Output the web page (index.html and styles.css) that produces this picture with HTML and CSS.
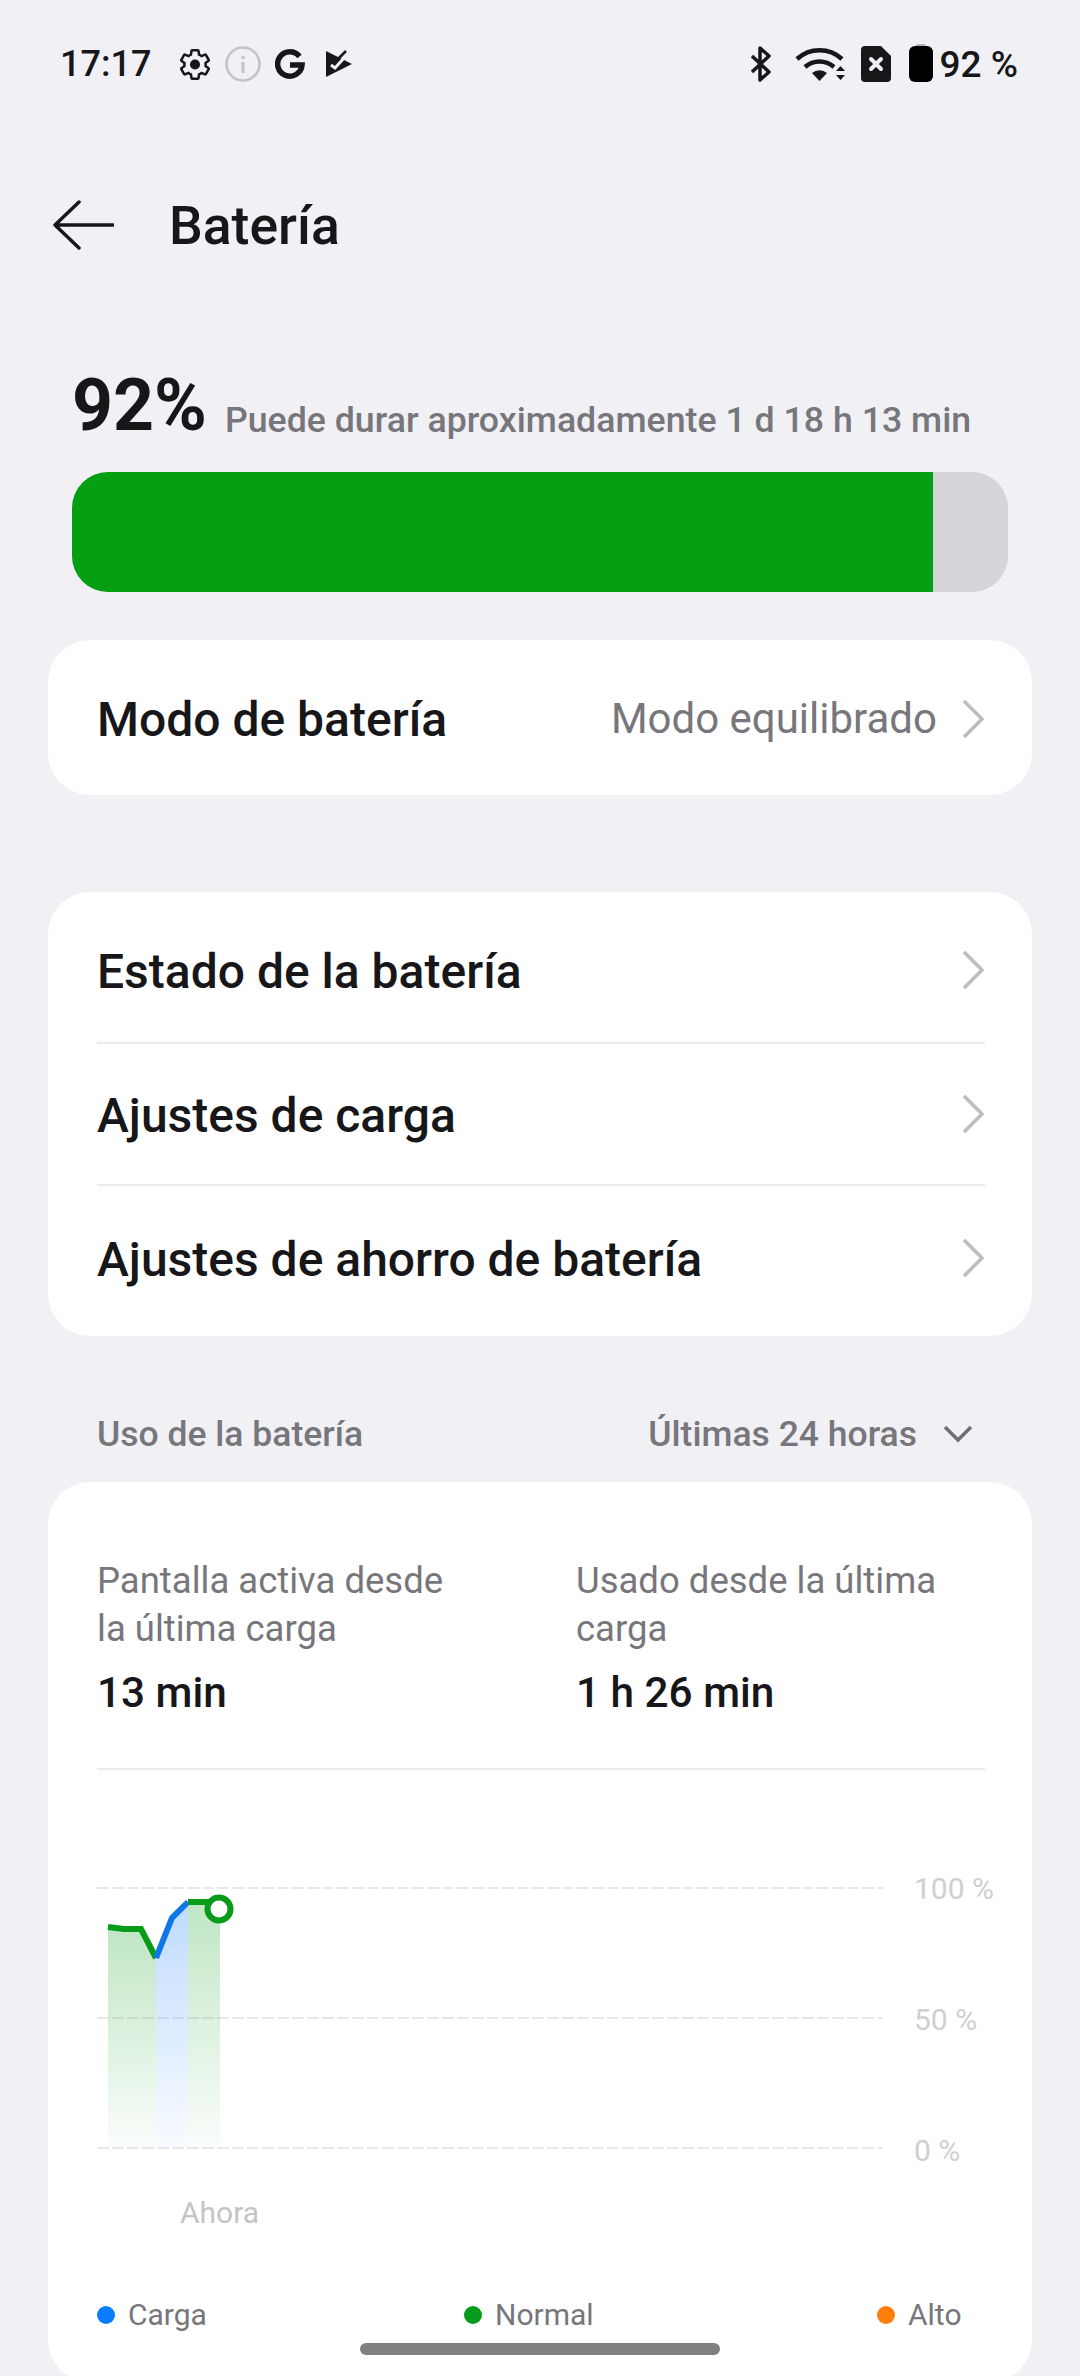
FILE: index.html
```html
<!DOCTYPE html>
<html lang="es">
<head>
  <meta charset="UTF-8">
  <title>Batería</title>
  <meta name="viewport" content="width=device-width, initial-scale=1.0" />
  <link rel="stylesheet" href="styles.css">
</head>
<body>
  <div class="status-bar">
    <div class="status-left">
      <span class="time">17:17</span>
      <svg class="ic-gear" width="30" height="31" viewBox="2 1.500 20 21"><path d="M19.140 12.940c.04-.3.06-.61.06-.94 0-.32-.02-.64-.07-.94l2.030-1.580c.18-.14.23-.41.12-.61l-1.920-3.320c-.12-.22-.37-.29-.59-.22l-2.390.96c-.5-.38-1.030-.7-1.620-.94l-.36-2.540c-.04-.24-.24-.41-.48-.41h-3.840c-.24 0-.43.17-.47.41l-.36 2.540c-.59.24-1.130.57-1.620.94l-2.390-.96c-.22-.08-.47 0-.59.22L2.740 8.870c-.12.21-.08.47.12.61l2.030 1.580c-.05.3-.09.63-.09.94s.02.64.07.94l-2.030 1.580c-.18.14-.23.41-.12.61l1.920 3.320c.12.22.37.29.59.22l2.390-.96c.5.38 1.030.7 1.620.94l.36 2.540c.05.24.24.41.48.41h3.840c.24 0 .44-.17.47-.41l.36-2.540c.59-.24 1.130-.56 1.620-.94l2.390.96c.22.08.47 0 .59-.22l1.920-3.320c.12-.22.07-.47-.12-.61z" fill="none" stroke="#17171a" stroke-width="1.700"/><circle cx="12" cy="12" r="3.400" fill="#17171a"/></svg>
      <svg class="ic-info" width="36" height="36" viewBox="0 0 36 36"><circle cx="18" cy="18" r="16.500" fill="none" stroke="#c4c4c6" stroke-width="2.500"/><rect x="16.500" y="16" width="3" height="11" fill="#c4c4c6"/><rect x="16.500" y="10" width="3" height="3" fill="#c4c4c6"/></svg>
      <svg class="ic-g" width="30" height="30" viewBox="0 0 30 30"><path d="M24.500 7.500A12.200 12.200 0 1 0 27 16H15" fill="none" stroke="#17171a" stroke-width="5.500"/></svg>
      <svg class="ic-play" width="26" height="28" viewBox="0 0 26 28"><path d="M0 1L26 14 0 27z" fill="#17171a"/><path d="M5 15l4 3 9-10" fill="none" stroke="#f0f0f5" stroke-width="3"/><path d="M12 9l8-8" fill="none" stroke="#17171a" stroke-width="2.500"/></svg>
    </div>
    <div class="status-right">
      <svg class="ic-bt" width="22" height="36" viewBox="0 0 22 36"><path d="M2 10l17 16-9 8V2l9 8L2 26" fill="none" stroke="#17171a" stroke-width="3.500" stroke-linejoin="round"/></svg>
      <svg class="ic-wifi" width="52" height="36" viewBox="0 0 52 36"><path d="M2 13a33 33 0 0 1 45 0M10 21a22 22 0 0 1 29 0" fill="none" stroke="#17171a" stroke-width="4.500"/><path d="M17 27a12 12 0 0 1 15 0l-7.500 8z" fill="#17171a"/><path d="M41 25l4.500-5 4.500 5zM41 29l4.500 5 4.500-5z" fill="#17171a"/></svg>
      <svg class="ic-sim" width="30" height="36" viewBox="0 0 30 36"><path d="M4 0h16l10 10v22a4 4 0 0 1-4 4H4a4 4 0 0 1-4-4V4a4 4 0 0 1 4-4z" fill="#17171a"/><path d="M10 13l10 10M20 13L10 23" stroke="#f0f0f5" stroke-width="4" stroke-linecap="round"/></svg>
      <svg class="ic-batt" width="24" height="38" viewBox="0 0 24 38"><rect x="7" y="0" width="10" height="4" rx="2" fill="#b5b5b8"/><rect x="0" y="2" width="24" height="36" rx="6" fill="#000"/></svg>
      <span class="batt-pct">92 %</span>
    </div>
  </div>

  <div class="top-bar">
    <svg class="back" width="62" height="50" viewBox="0 0 62 50"><path d="M27 2L3 25l24 23M3 25h58" fill="none" stroke="#17171a" stroke-width="3.500" stroke-linecap="round" stroke-linejoin="round"/></svg>
    <h1>Batería</h1>
  </div>

  <div class="level-row">
    <span class="level">92%</span>
    <span class="level-note">Puede durar aproximadamente 1 d 18 h 13 min</span>
  </div>
  <div class="level-bar"><div class="level-fill" style="width: 861px"></div></div>

  <div class="card mode-card">
    <div class="row">
      <span class="row-title">Modo de batería</span>
      <span class="row-value">Modo equilibrado</span>
      <svg class="chev" width="24" height="42" viewBox="0 0 24 42"><path d="M3 3l18 18L3 39" /></svg>
    </div>
  </div>

  <div class="card list-card">
    <div class="row row-first">
      <span class="row-title">Estado de la batería</span>
      <svg class="chev" width="24" height="42" viewBox="0 0 24 42"><path d="M3 3l18 18L3 39" /></svg>
    </div>
    <div class="row row-mid">
      <span class="row-title">Ajustes de carga</span>
      <svg class="chev" width="24" height="42" viewBox="0 0 24 42"><path d="M3 3l18 18L3 39" /></svg>
    </div>
    <div class="row row-last">
      <span class="row-title">Ajustes de ahorro de batería</span>
      <svg class="chev" width="24" height="42" viewBox="0 0 24 42"><path d="M3 3l18 18L3 39" /></svg>
    </div>
  </div>

  <div class="usage-head">
    <span>Uso de la batería</span>
    <span class="usage-range">Últimas 24 horas
      <svg width="30" height="20" viewBox="0 0 30 20"><path d="M2 3l13 13L28 3" fill="none" stroke="#6f6e73" stroke-width="3.500"/></svg>
    </span>
  </div>

  <div class="card usage-card">
    <div class="stats">
      <div class="stat">
        <p class="stat-label">Pantalla activa desde la última carga</p>
        <p class="stat-value">13 min</p>
      </div>
      <div class="stat">
        <p class="stat-label">Usado desde la última carga</p>
        <p class="stat-value">1 h 26 min</p>
      </div>
    </div>

    <div class="chart">
      <svg class="plot" width="786" height="264" viewBox="0 0 786 264">
        <defs>
          <linearGradient id="greenFade" x1="0" y1="0" x2="0" y2="1">
            <stop offset="0" stop-color="#0a9f1e" stop-opacity="0.26"/>
            <stop offset="1" stop-color="#0a9f1e" stop-opacity="0.02"/>
          </linearGradient>
          <linearGradient id="blueFade" x1="0" y1="0" x2="0" y2="1">
            <stop offset="0" stop-color="#2a86ff" stop-opacity="0.3"/>
            <stop offset="1" stop-color="#2a86ff" stop-opacity="0.03"/>
          </linearGradient>
        </defs>
        <path d="M0 3H786M0 133H786M0 263H786" stroke="#e8e8eb" stroke-width="2" stroke-dasharray="12 3" fill="none"/>
        <path d="M11 42L27 44H44L59 73V263H11z" fill="url(#greenFade)"/>
        <path d="M59 73L75 33L91 17V263H59z" fill="url(#blueFade)"/>
        <path d="M91 17H123V263H91z" fill="url(#greenFade)"/>
        <path d="M11 42L27 44H44L59 73" fill="none" stroke="#069b18" stroke-width="6"/>
        <path d="M59 73L75 33L91 17" fill="none" stroke="#0f78e6" stroke-width="6"/>
        <path d="M91 17H112" fill="none" stroke="#069b18" stroke-width="6"/>
        <circle cx="122" cy="24" r="11.500" fill="#fff" stroke="#069b18" stroke-width="6"/>
      </svg>
      <div class="y-labels">
        <span>100 %</span>
        <span>50 %</span>
        <span>0 %</span>
      </div>
    </div>
    <div class="x-label">Ahora</div>

    <div class="legend">
      <span class="legend-item"><i class="dot dot-blue"></i>Carga</span>
      <span class="legend-item"><i class="dot dot-green"></i>Normal</span>
      <span class="legend-item"><i class="dot dot-orange"></i>Alto</span>
    </div>
  </div>

  <div class="home-bar"></div>
</body>
</html>
```

FILE: styles.css
```css
* {
  box-sizing: border-box;
}

html, body {
  height: 2376px;
}

body {
  font-family: Roboto, sans-serif;
  background: #f0f0f5;
  margin: 0;
  color: #17171a;
  overflow: hidden;
  position: relative;
}

.status-bar {
  height: 128px;
  padding: 0 62px 0 60px;
  display: flex;
  justify-content: space-between;
  align-items: center;
  font-size: 36px;
  font-weight: 500;
}

.status-left, .status-right {
  display: flex;
  align-items: center;
}

.time {
  margin-right: 29px;
}

.ic-info {
  margin-left: 15px;
}

.ic-g {
  margin-left: 14px;
}

.ic-play {
  margin-left: 21px;
}

.ic-wifi {
  margin-left: 23px;
}

.ic-sim {
  margin-left: 14px;
}

.ic-batt {
  margin: -2px 0 0 18px;
}

.batt-pct {
  margin-left: 7px;
  font-size: 37px;
}

.top-bar {
  height: 194px;
  display: flex;
  align-items: center;
  padding-left: 52px;
}

.top-bar h1 {
  margin: 0 0 0 55px;
  font-size: 53.500px;
  font-weight: 500;
}

.level-row {
  height: 150px;
  padding: 41px 0 0 72px;
  display: flex;
  align-items: flex-end;
}

.level {
  font-size: 71.500px;
  font-weight: 700;
  margin-bottom: 25px;
}

.level-note {
  margin: 0 0 31px 18px;
  font-size: 35.700px;
  color: #77767b;
  font-weight: 500;
}

.level-bar {
  width: 936px;
  height: 120px;
  margin-left: 72px;
  background: #d5d5d9;
  border-radius: 36px;
  overflow: hidden;
}

.level-fill {
  height: 100%;
  background: #059f13;
}

.card {
  width: 984px;
  margin-left: 48px;
  background: #fff;
  border-radius: 42px;
}

.mode-card {
  height: 155px;
  margin-top: 48px;
  padding: 0 47px 0 49px;
}

.mode-card .row {
  height: 100%;
  padding-top: 2px;
}

.row {
  display: flex;
  align-items: center;
  justify-content: space-between;
}

.row-title {
  padding-top: 2px;
  font-size: 48px;
  font-weight: 500;
}

.row-value {
  margin-left: auto;
  margin-right: 24px;
  font-size: 42px;
  color: #77767b;
}

.chev path {
  fill: none;
  stroke: #bdbdc0;
  stroke-width: 3.500;
}

.list-card {
  margin-top: 97px;
  padding: 0 47px 0 49px;
}

.row-first, .row-last {
  height: 150px;
}

.row-first {
  padding-top: 6px;
}

.row-last {
  padding-bottom: 6px;
}

.row-mid {
  height: 144px;
  border-top: 2px solid #ebebee;
  border-bottom: 2px solid #ebebee;
}

.usage-head {
  height: 146px;
  padding: 50px 107px 0 97px;
  display: flex;
  justify-content: space-between;
  align-items: center;
  font-size: 35.500px;
  font-weight: 500;
  color: #77767b;
}

.usage-range {
  display: flex;
  align-items: center;
  gap: 26px;
}

.usage-card {
  height: 900px;
  padding: 75px 47px 0 49px;
}

.stats {
  display: grid;
  grid-template-columns: 479px 1fr;
  height: 213px;
  border-bottom: 2px solid #ebebee;
}

.stat-label {
  margin: 0;
  width: 370px;
  font-size: 36.500px;
  line-height: 48px;
  color: #77767b;
}

.stat-value {
  margin: 15px 0 0;
  font-size: 42.300px;
  font-weight: 500;
  line-height: 50px;
}

.chart {
  display: flex;
  margin-top: 115px;
}

.plot {
  flex: none;
  display: block;
}

.y-labels {
  margin-left: 31px;
  height: 294px;
  margin-top: -12px;
  display: flex;
  flex-direction: column;
  justify-content: space-between;
  font-size: 30px;
  line-height: 32px;
  white-space: nowrap;
  color: #cfcfd2;
}

.x-label {
  margin: 28px 0 0 83px;
  font-size: 30px;
  line-height: 36px;
  color: #c4c4c7;
}

.legend {
  margin-top: 66px;
  display: grid;
  grid-template-columns: 367px 413px auto;
  font-size: 30px;
  line-height: 36px;
  color: #77767b;
}

.legend-item {
  display: flex;
  align-items: center;
}

.dot {
  width: 18px;
  height: 18px;
  margin-right: 13px;
  border-radius: 50%;
}

.dot-blue {
  background: #0a7cff;
}

.dot-green {
  background: #069b18;
}

.dot-orange {
  background: #ff7f0a;
}

.home-bar {
  position: absolute;
  left: 360px;
  top: 2343px;
  width: 360px;
  height: 12px;
  border-radius: 6px;
  background: #808080;
}
```
